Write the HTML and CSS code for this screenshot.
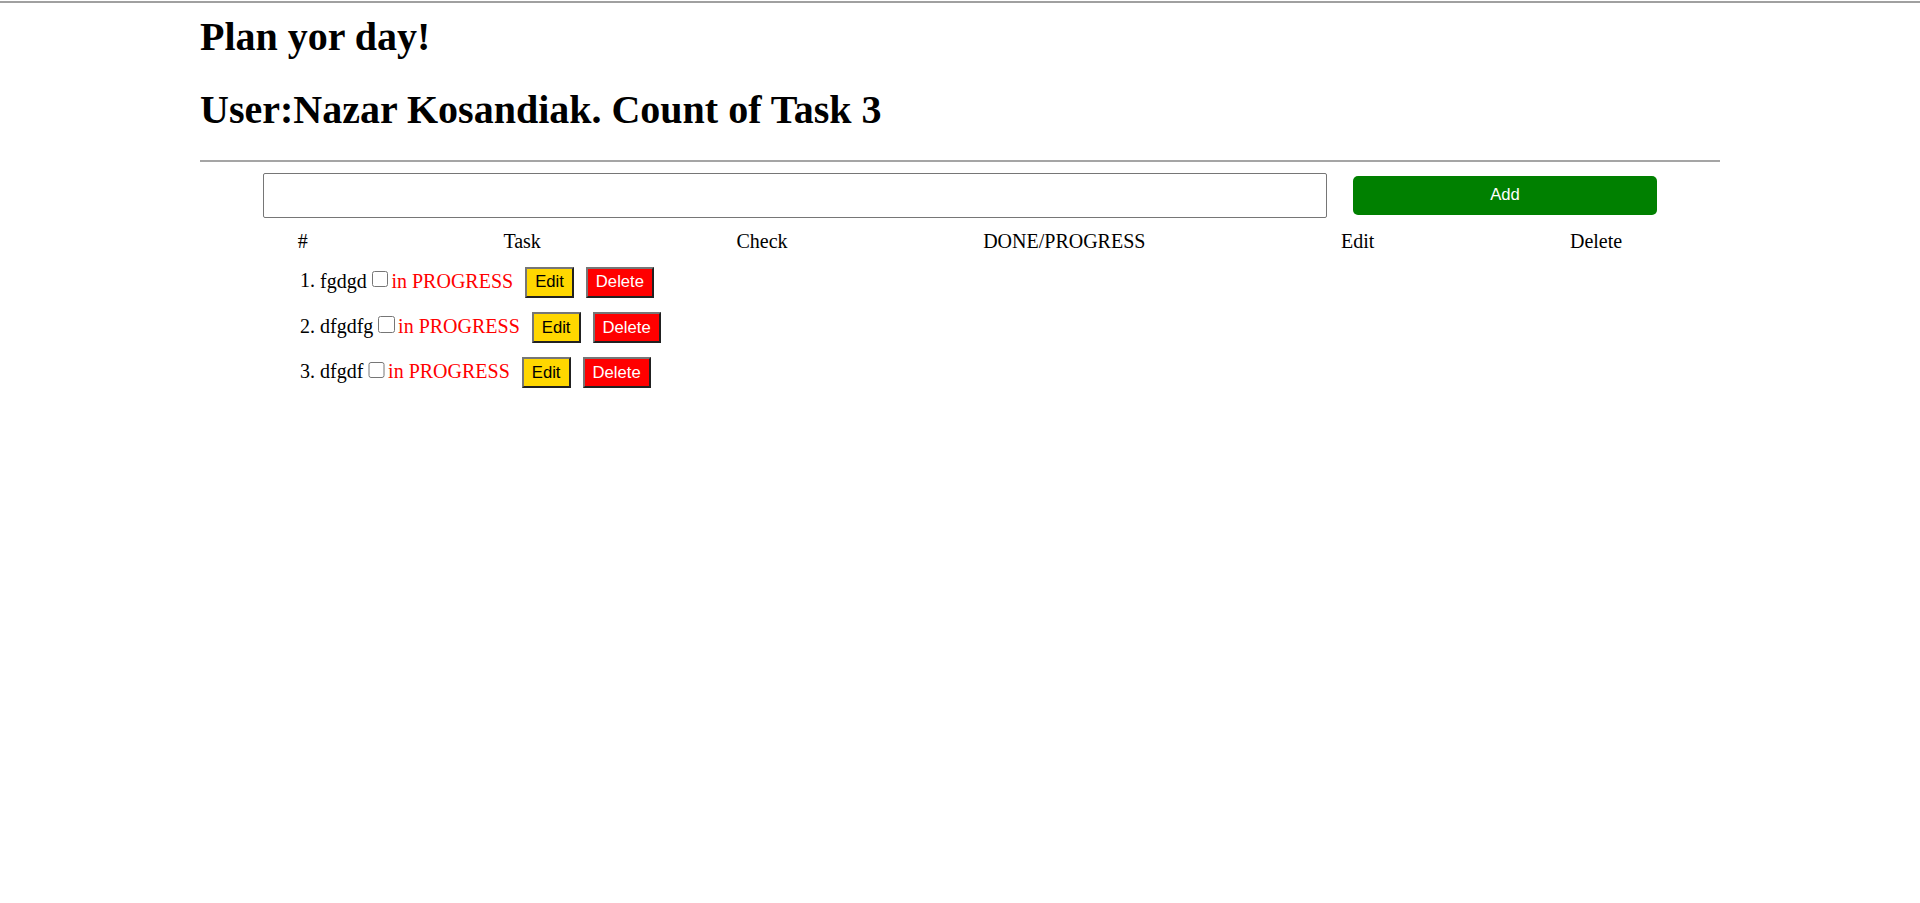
FILE: index.html
```html
<!DOCTYPE html>
<html>
<head>
<meta charset="utf-8">
<title>Plan yor day!</title>
<link rel="stylesheet" href="styles.css">
</head>
<body>
<div class="topline"></div>
<div class="page">
  <h1 class="title">Plan yor day!</h1>
  <h1 class="user">User:Nazar Kosandiak. Count of Task 3</h1>
  <hr class="divider">
  <form class="add-form">
    <input class="task-input" type="text">
    <button class="add-btn" type="button">Add</button>
  </form>
  <div class="head-row">
    <span>#</span>
    <span>Task</span>
    <span>Check</span>
    <span>DONE/PROGRESS</span>
    <span>Edit</span>
    <span>Delete</span>
  </div>
  <ol class="tasks">
    <li class="task">fgdgd<input class="check" type="checkbox"><span class="status">in PROGRESS</span><button class="btn btn-edit" type="button">Edit</button><button class="btn btn-delete" type="button">Delete</button></li>
    <li class="task">dfgdfg<input class="check" type="checkbox"><span class="status">in PROGRESS</span><button class="btn btn-edit" type="button">Edit</button><button class="btn btn-delete" type="button">Delete</button></li>
    <li class="task">dfgdf<input class="check" type="checkbox"><span class="status">in PROGRESS</span><button class="btn btn-edit" type="button">Edit</button><button class="btn btn-delete" type="button">Delete</button></li>
  </ol>
</div>
</body>
</html>
```
FILE: styles.css
```css
html, body {
  margin: 0;
  padding: 0;
  background: #ffffff;
}

body {
  font-family: "Liberation Serif", "Times New Roman", serif;
  font-size: 20px;
  color: #000000;
}

.topline {
  margin-top: 1px;
  height: 2px;
  background: #a0a0a0;
}

.page {
  margin: 0 200px;
}

h1 {
  font-size: 40px;
  line-height: 46px;
  font-weight: bold;
  margin: 0;
}

.title {
  padding-top: 10.5px;
}

.user {
  margin-top: 27px;
}

.divider {
  margin: 27px 0 0 0;
  border: 0;
  border-top: 2px solid #a5a5a5;
  height: 0;
}

.add-form {
  margin: 11px 0 0 0;
  display: flex;
  justify-content: center;
  align-items: center;
  gap: 26px;
}

.task-input {
  box-sizing: border-box;
  width: 1064px;
  height: 45px;
  border: 1px solid #767676;
  border-radius: 2px;
  padding: 0 4px;
  font-size: 16px;
  background: #fff;
}

.add-btn {
  box-sizing: border-box;
  width: 304px;
  height: 39px;
  border: none;
  border-radius: 5px;
  background: #008000;
  color: #ffffff;
  font-family: "Liberation Sans", Arial, sans-serif;
  font-size: 16.67px;
  padding: 0;
}

.head-row {
  margin-top: 12px;
  display: flex;
  justify-content: space-around;
  line-height: 23px;
}

.tasks {
  margin: 0;
  padding-left: 120px;
  list-style: decimal outside;
}

.task {
  margin-top: 14.3px;
}

.check {
  box-sizing: border-box;
  width: 16.25px;
  height: 16.25px;
  margin: 3.75px 3.5px 3.75px 5px;
}

.status {
  color: #ff0000;
}

.btn {
  font-family: "Liberation Sans", Arial, sans-serif;
  font-size: 16.67px;
  line-height: normal;
  padding: 3.5px 8px;
  border: 2px outset #767676;
  margin-left: 12px;
  border-radius: 0;
}

.btn-edit {
  background: #ffd700;
  color: #000000;
}

.btn-delete {
  background: #ff0000;
  color: #ffffff;
}
```
